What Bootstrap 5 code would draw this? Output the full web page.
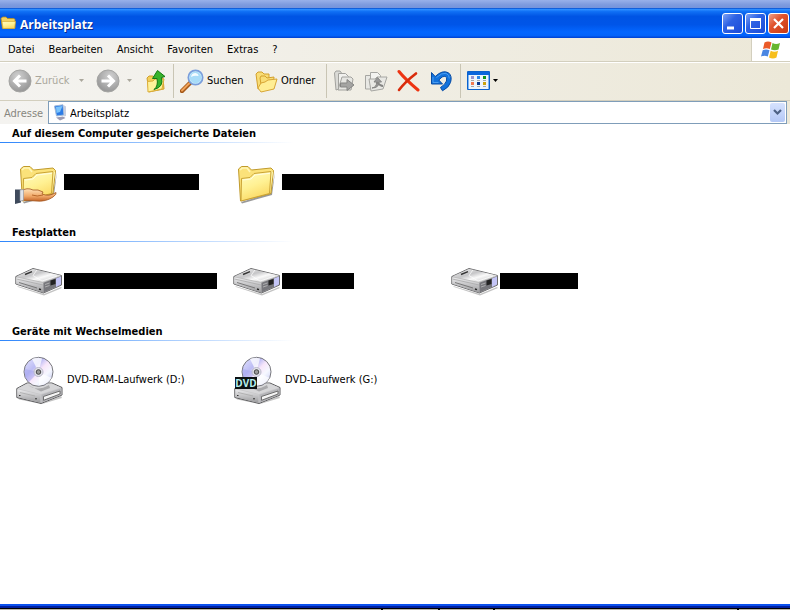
<!DOCTYPE html>
<html lang="de">
<head>
<meta charset="utf-8">
<meta name="viewport" content="width=device-width, initial-scale=1">
<title>Arbeitsplatz</title>
<link rel="stylesheet" href="https://cdn.jsdelivr.net/npm/bootstrap@5.3.0/dist/css/bootstrap.min.css">
<style>
  body { font: 11px/16px "DejaVu Sans Condensed", "DejaVu Sans", sans-serif; color: #000; background: #fff; }
  button { font: inherit; color: inherit; background: none; border: 0; padding: 0; white-space: nowrap; }
  svg { display: block; flex: none; }
  .behind { height: 8px; background: linear-gradient(#98b1ea, #7d9ade 60%, #7494dc); }
  .titlebar { height: 30px; padding-right: 1px; color: #fff; background: linear-gradient(#0348c8 0, #2b8cff 5%, #1070f5 12%, #0054e4 28%, #0055e8 55%, #0366ff 80%, #0363fa 92%, #003fcf 100%); }
  .titlebar h1 { font: bold 12px/20px "Open Sans", sans-serif; text-shadow: 1px 1px #0a2a8c; padding-top: 4px; }
  .winbtns { gap: 2px; }
  .winbtn { width: 21px; height: 21px; border: 1px solid #fff; border-radius: 3px; background: linear-gradient(135deg, #7da2f5, #2e62e4 40%, #1b4bd8); }
  .winbtn-close { background: linear-gradient(135deg, #f0a088, #e0532e 40%, #c83a14); }
  .chrome { background: linear-gradient(90deg, #f4f3f0, #ece8d8); }
  .menubar { height: 24px; border-bottom: 1px solid #d3cfbe; }
  .menus { gap: 14px; padding-left: 8px; }
  .throbber { width: 39px; background: #fff; border-left: 1px solid #d3cfbe; }
  .tools { height: 39px; border-top: 1px solid #fff; border-bottom: 1px solid #d3cfbe; padding: 0 0 2px 8px; }
  .tools button { gap: 3px; }
  .off { color: #aaa79c; }
  .b-back { width: 80px; } .b-fwd { width: 49px; } .b-find { width: 75px; } .b-tree { width: 63px; }
  .rule { width: 1px; height: 34px; background: #c9c5b4; flex: none; margin-right: 6px; }
  .addr { height: 23px; padding-right: 3px; }
  .addr label { color: #87867e; padding: 2px 4px 0; width: 48px; flex: none; }
  .field { border: 1px solid #7f9db9; background: #fff; padding: 1px 1px 1px 4px; }
  .field input { border: 0; outline: 0; padding: 2px 0 0 3px; min-width: 0; font: inherit; color: #000; }
  .drop { width: 15px; border-radius: 2px; background: linear-gradient(#d6e2fe, #b4c8f6); }
  .grp h2 { font: bold 11px/20px "DejaVu Sans Condensed", "DejaVu Sans", sans-serif; padding-left: 12px; height: 18px; }
  .grp-line { height: 1px; background: linear-gradient(90deg, #2f86fb, #fff 294px); }
  .grp-items { display: grid; grid-template-columns: repeat(auto-fill, 218px); height: 78px; margin-bottom: 2px; padding-left: 15px; }
  .place { gap: 4px; }
  .hid { background: #000; height: 16px; margin-left: -3px; }
  .w-a { width: 135px; } .w-b { width: 102px; } .w-c { width: 153px; } .w-d { width: 72px; } .w-e { width: 78px; }
  .edge { height: 4px; background: linear-gradient(#0a50ee 50%, #0020a0 50%); }
  .below { height: 2px; background: #b8b4a8; border-top: 1px solid #000; }
  .below span { width: 2px; height: 1px; background: #000; }
  .tick-a { margin-left: 381px; } .tick-b { margin-left: 55px; } .tick-c { margin-left: 53px; } .tick-d { margin-left: 242px; }
</style>
<script src="https://cdn.jsdelivr.net/npm/bootstrap@5.3.0/dist/js/bootstrap.bundle.min.js"></script>
</head>
<body class="d-flex flex-column min-vh-100">

<svg width="0" height="0" class="position-absolute" aria-hidden="true">
  <defs>
    <linearGradient id="gFold" x1="0" y1="0" x2="0.4" y2="1"><stop offset="0" stop-color="#fffcc4"/><stop offset=".55" stop-color="#fff193"/><stop offset="1" stop-color="#fbd964"/></linearGradient>
    <linearGradient id="gTop" x1="0" y1="0" x2="1" y2="1"><stop offset="0" stop-color="#f0f0f0"/><stop offset=".4" stop-color="#c6c6c8"/><stop offset=".6" stop-color="#fafafa"/><stop offset="1" stop-color="#b4b4b6"/></linearGradient>
    <linearGradient id="gSide" x1="0" y1="0" x2="0" y2="1"><stop offset="0" stop-color="#ececee"/><stop offset="1" stop-color="#9a9a9c"/></linearGradient>
    <linearGradient id="gDisc" x1="0" y1="0" x2="1" y2="1"><stop offset="0" stop-color="#e6e6ff"/><stop offset=".35" stop-color="#bcbcf4"/><stop offset=".5" stop-color="#f8e6fa"/><stop offset=".68" stop-color="#f6f8ff"/><stop offset="1" stop-color="#b8bcf0"/></linearGradient>
    <radialGradient id="gBall" cx=".4" cy=".3" r=".75"><stop offset="0" stop-color="#d2d2d2"/><stop offset="1" stop-color="#929292"/></radialGradient>
    <linearGradient id="gHand" x1="0" y1="0" x2="0" y2="1"><stop offset="0" stop-color="#ffe2b8"/><stop offset=".6" stop-color="#f0a868"/><stop offset="1" stop-color="#c46428"/></linearGradient>
    <symbol id="folder" viewBox="0 0 48 48">
      <path d="M8 44 38 35 42 14 41.500 18 39 37 9 45.500Z" fill="#777" opacity=".75"/>
      <path d="M5.500 11 8.500 8.500H15l3.500 3.500L38 10l2.500 2.500-2.500 23L7.500 43Z" fill="#fbe27a" stroke="#c09a2c"/>
      <path d="M7 12 9.500 10H14l3 4" fill="none" stroke="#fff6b8" stroke-width="1.500"/>
      <path d="M37 12.500 35 31l2 3 3-20Z" fill="#fff6ae"/>
      <path d="M8.500 20.500 17 19.500l4-4 17-2L36.500 35.500 8 43Z" fill="url(#gFold)" stroke="#cba334"/>
      <path d="M10 22 18 21l4-4 15-1.700" fill="none" stroke="#fffde0"/>
    </symbol>
    <symbol id="drive" viewBox="0 0 48 48">
      <path d="M2 29 29 37 46 30 47 31 29 38.500 3 30Z" fill="#888" opacity=".5"/>
      <path d="M.8 19.500 18 11.500 46.500 18.500V28L28.500 36 .8 27Z" fill="#bbb" stroke="#6b6b6d"/>
      <path d="M1.500 19.500 18 12 46 18.500 28 25Z" fill="url(#gTop)"/>
      <path d="M1.200 20.300 28 26V35.500L1.200 26.800Z" fill="url(#gSide)"/>
      <path d="M28.500 25.700 46 19.300V27.800L28.500 35.500Z" fill="#77777c"/>
      <path d="M41 21.500 46 19.500V27.600L41 30Z" fill="#c4c5f6"/>
      <path d="M35.500 23.500 40.500 22V27L35.500 28.500Z" fill="#222"/>
      <path d="M30 27.500 34.500 26M30 30 34.500 28.500" stroke="#bbb" stroke-width=".8"/>
      <path d="M1.500 22 28 28" stroke="#aaa" stroke-width=".8"/><path d="M4 25.500 22 31" stroke="#666" stroke-width=".8"/><path d="M24 32 26 32.600" stroke="#222" stroke-width="1.400"/>
      <path d="M10 17.500 17 14.700" stroke="#333" stroke-width="1.400"/>
      <path d="M22 12.800 18 18.500 27 24 42 19" fill="none" stroke="#fff" opacity=".7"/>
    </symbol>
    <symbol id="disc" viewBox="0 0 48 48">
      <path d="M3 42 26 48 46 40 47 42 27 48 4 43.500Z" fill="#888" opacity=".5"/>
      <path d="M1.800 32.500 12 27H37L47 31.500V39L26 47.500 1.800 41.500Z" fill="#c8c8ca" stroke="#5b5b5d"/>
      <path d="M2.500 32.500 12.500 27.500H36.500L46 31.500 26 38Z" fill="#d6d6d8"/>
      <path d="M2.300 33.200 25.500 38.700V46.800L2.300 41Z" fill="url(#gSide)"/>
      <path d="M26.500 38.800 46.500 32.200V38.800L26.500 46.800Z" fill="#b4b4b8"/>
      <path d="M28.500 40.500 45 35V38L28.500 44.300Z" fill="#f4f4f4" stroke="#555" stroke-width=".8"/>
      <path d="M5 36.500 20 40" stroke="#aaa" stroke-width=".8"/><path d="M4 39.500h1.500M20 42.800h2" stroke="#333"/>
      <path d="M13 29Q22 36 34 29L35 32 26 35.500Z" fill="#8a8a8d" opacity=".6"/>
      <circle cx="23.500" cy="15.800" r="14.500" fill="url(#gDisc)" stroke="#77777c"/>
      <path d="M23.500 16 17 3Q22 1 27 2.500Z" fill="#fff" opacity=".75"/>
      <path d="M23.500 16 24 29.500Q33 29 36.500 22Z" fill="#fff" opacity=".7"/>
      <path d="M23.500 16 9.500 13Q9 22 14 26Z" fill="#a4a4ee" opacity=".55"/>
      <circle cx="23.500" cy="16" r="4.500" fill="#e4e4ec" stroke="#b8b8c8"/>
      <circle cx="23.500" cy="16" r="2.300" fill="#9a9a9a" stroke="#444"/>
    </symbol>
    <symbol id="ball" viewBox="0 0 24 24">
      <circle cx="12" cy="12" r="11" fill="url(#gBall)" stroke="#a5a5a3"/>
      <path d="M18.500 12H7M12 6.500 6.500 12 12 17.500" fill="none" stroke="#fff" stroke-width="3"/>
    </symbol>
    <symbol id="caret" viewBox="0 0 5 3"><path d="M0 0H5L2.500 3Z" fill="currentColor"/></symbol>
  </defs>
</svg>

<div class="behind"></div>

<header class="titlebar d-flex align-items-center">
  <svg width="16" height="16" viewBox="0 0 16 16" aria-hidden="true"><path d="M1 3.500 2.500 2H6l1.500 1.500H14l1 1V13L2.500 13.500Z" fill="#f3d160" stroke="#b58d1d" stroke-width=".8"/><path d="M2 6.500H15.500L14.500 13.500H3Z" fill="url(#gFold)" stroke="#d9ac36" stroke-width=".7"/></svg>
  <h1 class="m-0 ms-1 flex-grow-1">Arbeitsplatz</h1>
  <div class="winbtns d-flex">
    <button class="winbtn" type="button" aria-label="Minimieren"><svg width="19" height="19" viewBox="0 0 19 19"><path d="M4 12.500h7v3H4z" fill="#fff"/></svg></button>
    <button class="winbtn" type="button" aria-label="Maximieren"><svg width="19" height="19" viewBox="0 0 19 19"><path d="M4.500 5.500h10v9h-10z" fill="none" stroke="#fff"/><path d="M4 4h11v3H4z" fill="#fff"/></svg></button>
    <button class="winbtn winbtn-close" type="button" aria-label="Schließen"><svg width="19" height="19" viewBox="0 0 19 19"><path d="M5 5 14 14M14 5 5 14" stroke="#fff" stroke-width="2.200"/></svg></button>
  </div>
</header>

<div class="chrome">
  <div class="menubar d-flex">
    <nav class="menus d-flex align-items-center flex-grow-1">
      <button type="button">Datei</button>
      <button type="button">Bearbeiten</button>
      <button type="button">Ansicht</button>
      <button type="button">Favoriten</button>
      <button type="button">Extras</button>
      <button type="button">?</button>
    </nav>
    <div class="throbber d-flex align-items-center justify-content-center">
      <svg width="20" height="20" viewBox="0 0 20 20" role="img" aria-label="Windows">
        <path d="M3.500 2.500Q7 .5 10.500 2.500L8.800 9Q5.500 7.500 2 9Z" fill="#ea5a28"/>
        <path d="M11.500 3Q15 5 19 3L17.500 9.500Q14 11 10 9.500Z" fill="#67b62e"/>
        <path d="M1.700 10.200Q5 8.700 8.500 10.200L6.800 16.500Q3.500 15 0 16.500Z" fill="#4a86e2"/>
        <path d="M9.700 10.800Q13.500 12.500 17 10.800L15.500 17.500Q12 19.500 8 17.500Z" fill="#f7bf1c"/>
      </svg>
    </div>
  </div>

  <div class="tools d-flex align-items-center" role="toolbar" aria-label="Symbolleiste">
    <button type="button" class="b-back off d-flex align-items-center"><svg width="24" height="24"><use href="#ball"/></svg>Zurück<svg class="ms-auto me-1" width="5" height="3"><use href="#caret"/></svg></button>
    <button type="button" class="b-fwd off d-flex align-items-center ms-2" aria-label="Vorwärts"><svg width="24" height="24" viewBox="0 0 24 24"><g transform="matrix(-1 0 0 1 24 0)"><use href="#ball" width="24" height="24"/></g></svg><svg class="ms-1" width="5" height="3"><use href="#caret"/></svg></button>
    <button type="button" aria-label="Aufwärts"><svg width="24" height="24" viewBox="0 0 24 24">
      <path d="M2 9 4 7h4l2 2h8l1 11-15 3Z" fill="#f3cf5a" stroke="#d0a02c"/><path d="M2.500 12.500 8 12l2-2 9 0-2 10-14 3Z" fill="#fff29a" stroke="#dcae3a"/>
      <path d="M9 20.500Q13.500 17 12 9.500L7.500 9.500 12.500 1.500 20 7.500 16.500 8.500Q19 18 9 20.500Z" fill="#37b32c" stroke="#147a14"/></svg></button>
    <span class="rule ms-1"></span>
    <button type="button" class="b-find d-flex align-items-center"><svg width="24" height="24" viewBox="0 0 24 24">
      <path d="M2 22 10 14" stroke="#a55818" stroke-width="4.500" stroke-linecap="round"/><path d="M2 21.500 9 14.500" stroke="#f0a35a" stroke-width="2" stroke-linecap="round"/>
      <circle cx="15.500" cy="8.500" r="7.200" fill="#c8ecfc" stroke="#7a9edb" stroke-width="1.700"/><circle cx="15.500" cy="8.500" r="5.700" fill="#a8dcf8"/><path d="M11 8Q11.500 4 15.500 4q3 .5 3 3-4-1-7.500 1Z" fill="#f4fcff"/></svg>Suchen</button>
    <button type="button" class="b-tree d-flex align-items-center"><svg width="23" height="24" viewBox="0 0 23 24">
      <path d="M1 5 3 3h4l2 2h5v12L3 20Z" fill="#f8dd76" stroke="#d3a02c"/><path d="M5 9 6 7h4l2 2 7-1-1 11-11 3Z" fill="#f8dd76" stroke="#d3a02c"/><path d="M6 14 10 13l3-2 9-1-3 10-13 3-3-4Z" fill="#ffee94" stroke="#d8a636"/></svg>Ordner</button>
    <span class="rule ms-2"></span>
    <button type="button" class="me-2" aria-label="Verschieben nach"><svg width="23" height="24" viewBox="0 0 23 24" fill="#dadad6" stroke="#a2a29e">
      <path d="M1.500 4 3 2h4l1.500 2v15L3 21Z"/><path d="M5.500 4.500h7l3 3V20h-10Z" fill="#f1f1ee"/><path d="M9 8h9l2 2-2 11H5Z" fill="#e6e6e2"/><path d="M7.500 14H14v-3.500l7 5.500-7 5.500V18H7.500Z" fill="#a4a4a2" stroke="#858583"/></svg></button>
    <button type="button" class="me-2" aria-label="Kopieren nach"><svg width="24" height="24" viewBox="0 0 24 24" fill="#e8e8e4" stroke="#a6a6a2">
      <path d="M1.500 6.500h5L8 8v12H1.500Z"/><path d="M6.500 3.500h7l3 3V17h-10Z" fill="#f3f3f0"/><path d="M5 10h6l2-2h10l-4 12-12 2Z"/><path d="M8 19Q13 18 12.500 13H10l3.500-4.500 4 4.500h-2.500Q15 19 8 19Z" fill="#999" stroke="#868684"/><path d="M13 13Q16 17 19 17" stroke="#858583" stroke-width="2" fill="none"/></svg></button>
    <button type="button" class="me-2" aria-label="Löschen"><svg width="24" height="24" viewBox="0 0 24 24" fill="none" stroke-linecap="round"><path d="M3 2.500Q9 10 22 21" stroke="#ed3412" stroke-width="3"/><path d="M20 4.500Q9 13 3 21" stroke="#d92c0c" stroke-width="2.600"/></svg></button>
    <button type="button" aria-label="Rückgängig"><svg width="24" height="24" viewBox="0 0 24 24"><path d="M3.500 3.500V15H14.500L10.800 11Q14.500 6.800 17 7.200 19.500 8 18.500 12 17.300 15.500 12.500 18.500L14.500 21.800Q21 18.500 22.500 13.500 24.500 7 20.500 3.800 14.500 .5 7.200 7.500Z" fill="#1272dc" stroke="#084ca4"/><path d="M5 8V13.500H10.500M8.500 8.500Q14 3.500 18 4.300 21.500 5.800 21.300 9.500" fill="none" stroke="#4a9cf0"/></svg></button>
    <span class="rule ms-2"></span>
    <button type="button" class="d-flex align-items-center" aria-label="Ansichten"><svg width="23" height="19" viewBox="0 0 23 19">
      <path d="M.5.500h22v18H.5z" fill="#eef5fc" stroke="#0c62cc"/><path d="M1 1h21v3H1z" fill="#0a66dc"/><path d="M1 4h1v14H1zM21 4h1v14h-1z" fill="#7db6f4"/>
      <path d="M4 5h3v3H4z" fill="#9a94cf"/><path d="M10 5h3v3h-3z" fill="#2c86e8"/><path d="M16 5h3v3h-3z" fill="#10951c"/><path d="M4 11h3v3H4z" fill="#f47a50"/><path d="M10 11h3v3h-3z" fill="#0c3a92"/><path d="M16 11h3v3h-3z" fill="#cba30e"/><path d="M4 9.500h3m3 0h3m3 0h3M4 15.500h3m3 0h3m3 0h3" stroke="#a8a8a8"/></svg><svg width="5" height="3"><use href="#caret"/></svg></button>
  </div>

  <div class="addr d-flex">
    <label for="address" class="align-self-center">Adresse</label>
    <div class="field d-flex align-items-center flex-grow-1">
      <svg width="14" height="17" viewBox="0 0 14 17" aria-hidden="true"><path d="M1.500 2 10 .8 11 11 3.500 12Z" fill="#2b7be6" stroke="#9fb8d8"/><path d="M3 3 9.500 2 7 8 3.500 9Z" fill="#7cc4fb"/><path d="M10.500 1 13 2.500V12L11 12.500Z" fill="#c8cfe0"/><path d="M3 13.500 10 12.500 12.500 14 7 16.500Z" fill="#9c9cb4" /></svg>
      <input id="address" type="text" class="flex-grow-1" value="Arbeitsplatz">
      <button type="button" class="drop align-self-stretch d-flex align-items-center justify-content-center" aria-label="Adressliste öffnen"><svg width="9" height="7" viewBox="0 0 9 7"><path d="M1 1 4.500 4.500 8 1" fill="none" stroke="#4d6185" stroke-width="2.200"/></svg></button>
    </div>
  </div>
</div>

<main class="flex-grow-1">
  <section class="grp">
    <h2 class="m-0">Auf diesem Computer gespeicherte Dateien</h2>
    <div class="grp-line"></div>
    <div class="grp-items">
      <div class="place d-flex align-items-center"><svg width="48" height="48" viewBox="0 0 48 48"><use href="#folder" width="48" height="48"/>
        <path d="M6 33Q12 29 18 32 23 31 28 34L27 36Q34 39 41 34.500 42 36 38 39 31 44 21 43L6 42Z" fill="url(#gHand)" stroke="#a2561e" stroke-width=".8"/><path d="M17 37Q22 39 28 37" fill="none" stroke="#b8682c"/>
        <path d="M0 31.500H6V44.500L0 46Z" fill="#3f4a5c"/><path d="M5 32 8.500 31.500V42.500L5 43Z" fill="#dfe3ea" stroke="#8a909c" stroke-width=".6"/></svg><span class="hid w-a"></span></div>
      <div class="place d-flex align-items-center"><svg width="48" height="48"><use href="#folder"/></svg><span class="hid w-b"></span></div>
    </div>
  </section>
  <section class="grp">
    <h2 class="m-0">Festplatten</h2>
    <div class="grp-line"></div>
    <div class="grp-items">
      <div class="place d-flex align-items-center"><svg width="48" height="48"><use href="#drive"/></svg><span class="hid w-c"></span></div>
      <div class="place d-flex align-items-center"><svg width="48" height="48"><use href="#drive"/></svg><span class="hid w-d"></span></div>
      <div class="place d-flex align-items-center"><svg width="48" height="48"><use href="#drive"/></svg><span class="hid w-e"></span></div>
    </div>
  </section>
  <section class="grp">
    <h2 class="m-0">Geräte mit Wechselmedien</h2>
    <div class="grp-line"></div>
    <div class="grp-items">
      <div class="place d-flex align-items-center"><svg width="48" height="48"><use href="#disc"/></svg><span>DVD-RAM-Laufwerk (D:)</span></div>
      <div class="place d-flex align-items-center"><svg width="48" height="48" viewBox="0 0 48 48"><use href="#disc" width="48" height="48"/><path d="M2 21h22v12H2z" fill="#0c1214"/><text x="13" y="31" text-anchor="middle" font-size="10" font-weight="bold" font-family="Open Sans, sans-serif" fill="#b8f0ee">DVD</text></svg><span>DVD-Laufwerk (G:)</span></div>
    </div>
  </section>
</main>

<footer>
  <div class="edge"></div>
  <div class="below d-flex overflow-hidden"><span class="tick-a"></span><span class="tick-b"></span><span class="tick-c"></span><span class="tick-d"></span></div>
</footer>
</body>
</html>
